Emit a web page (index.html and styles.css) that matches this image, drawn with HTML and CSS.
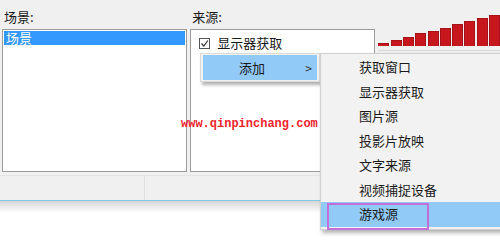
FILE: index.html
```html
<!DOCTYPE html>
<html lang="zh-CN">
<head>
    <meta charset="UTF-8">
    <title>OBS 来源</title>
    <link rel="stylesheet" href="styles.css">
</head>
<body>
    <div class="window">
        <div class="panels">
            <div class="panel scene">
                <div class="label">场景:</div>
                <div class="list">
                    <div class="row selected">场景</div>
                </div>
            </div>
            <div class="panel sources">
                <div class="label">来源:</div>
                <div class="list">
                    <div class="row check-row">
                        <span class="checkbox">
                            <svg width="9" height="9" viewBox="0 0 9 9"><path d="M1.5 4.5 L3.8 7 L7.8 1.5" fill="none" stroke="#333" stroke-width="1.2"/></svg>
                        </span>
                        显示器获取
                    </div>
                </div>
            </div>
            <div class="meter">
                <div class="bars">
                    <div class="bar" style="height:3px"></div>
                    <div class="bar" style="height:6px"></div>
                    <div class="bar" style="height:9px"></div>
                    <div class="bar" style="height:13px"></div>
                    <div class="bar" style="height:15px"></div>
                    <div class="bar" style="height:18px"></div>
                    <div class="bar" style="height:22px"></div>
                    <div class="bar" style="height:25px"></div>
                    <div class="bar" style="height:28px"></div>
                    <div class="bar" style="height:31px"></div>
                </div>
                <div class="meter-line"></div>
            </div>
        </div>
        <div class="strip">
            <div class="strip-cell first"></div>
            <div class="strip-cell"></div>
        </div>
    </div>
    <div class="shadow"></div>

    <div class="watermark">www.qinpinchang.com</div>

    <div class="menu">
        <div class="menu-item active">
            <span>添加</span>
            <span class="arrow">&gt;</span>
        </div>
    </div>

    <div class="submenu">
        <div class="sub-item">获取窗口</div>
        <div class="sub-item">显示器获取</div>
        <div class="sub-item">图片源</div>
        <div class="sub-item">投影片放映</div>
        <div class="sub-item">文字来源</div>
        <div class="sub-item">视频捕捉设备</div>
        <div class="sub-item active">游戏源</div>
    </div>
    <div class="mark"></div>
</body>
</html>
```
FILE: styles.css
```css
* {
    box-sizing: border-box;
}

body {
    margin: 0px;
    padding: 0px;
    width: 500px;
    height: 249px;
    overflow: hidden;
    background-color: #ffffff;
    font-family: "Noto Sans CJK SC", "Noto Sans", sans-serif;
    font-size: 13px;
    color: #1a1a1a;
    position: relative;
}

.window {
    width: 100%;
    height: 201px;
    background-color: #f0f0f0;
    border-bottom: 1px solid #7cc8e4;
    display: flex;
    flex-direction: column;
}

.panels {
    height: 175px;
    display: flex;
}

.panel {
    display: flex;
    flex-direction: column;
}

.scene {
    width: 191px;
    padding-left: 2px;
    padding-right: 2px;
}

.sources {
    width: 188px;
    padding-left: 1px;
}

.label {
    height: 29px;
    padding-top: 8px;
    padding-left: 2px;
    line-height: 18px;
}

.list {
    height: 143px;
    background-color: #ffffff;
    border: 1px solid #9c9c9c;
    padding: 1px;
}

.row {
    height: 14px;
    line-height: 14px;
    padding-left: 2px;
}

.selected {
    background-color: #3399ff;
    color: #ffffff;
}

.check-row {
    display: flex;
    align-items: center;
    height: 16px;
    margin-top: 4px;
    padding-left: 7px;
    gap: 7px;
}

.checkbox {
    width: 11px;
    height: 11px;
    border: 1px solid #555;
    display: flex;
    align-items: center;
    justify-content: center;
}

.meter {
    flex: 1;
    padding-left: 3px;
    padding-top: 15px;
}

.bars {
    height: 31px;
    display: flex;
    align-items: flex-end;
    gap: 1.3px;
}

.bar {
    width: 11px;
    background-color: #c8161e;
    border: 1px solid #a51218;
    border-bottom: none;
}

.meter-line {
    margin-top: 4px;
    height: 1px;
    background-color: #d8d8d8;
}

.strip {
    height: 25px;
    border-top: 1px solid #e4e4e4;
    display: flex;
}

.strip-cell {
    flex: 1;
}

.strip-cell.first {
    flex: 0 0 145px;
    border-right: 1px solid #e0e0e0;
}

.shadow {
    height: 12px;
    background-image: linear-gradient(#d6d6d6, #ffffff);
}

.watermark {
    position: absolute;
    left: 181px;
    top: 117px;
    font-family: "Liberation Mono", monospace;
    font-size: 12px;
    line-height: 14px;
    font-weight: bold;
    color: #f0242c;
}

.menu {
    position: absolute;
    left: 200px;
    top: 53px;
    width: 120px;
    height: 29px;
    background-color: #f2f2f2;
    border: 1px solid #dadada;
    padding: 1px 2px 1px 2px;
    box-shadow: 2px 3px 3px rgba(0, 0, 0, 0.3);
}

.menu-item {
    height: 25px;
    display: flex;
    align-items: center;
    padding-left: 36px;
    padding-right: 5px;
    justify-content: space-between;
}

.active {
    background-color: #91c9f7;
}

.arrow {
    font-size: 12px;
    color: #333;
}

.submenu {
    position: absolute;
    left: 320px;
    top: 53px;
    width: 190px;
    height: 177px;
    background-color: #f2f2f2;
    border: 1px solid #cfcfcf;
    padding-top: 1px;
    box-shadow: 2px 3px 4px rgba(0, 0, 0, 0.3);
}

.sub-item {
    height: 24.5px;
    line-height: 24.5px;
    padding-left: 38px;
}

.mark {
    position: absolute;
    left: 327px;
    top: 203px;
    width: 102px;
    height: 27px;
    border: 2px solid #c070d8;
}
```
